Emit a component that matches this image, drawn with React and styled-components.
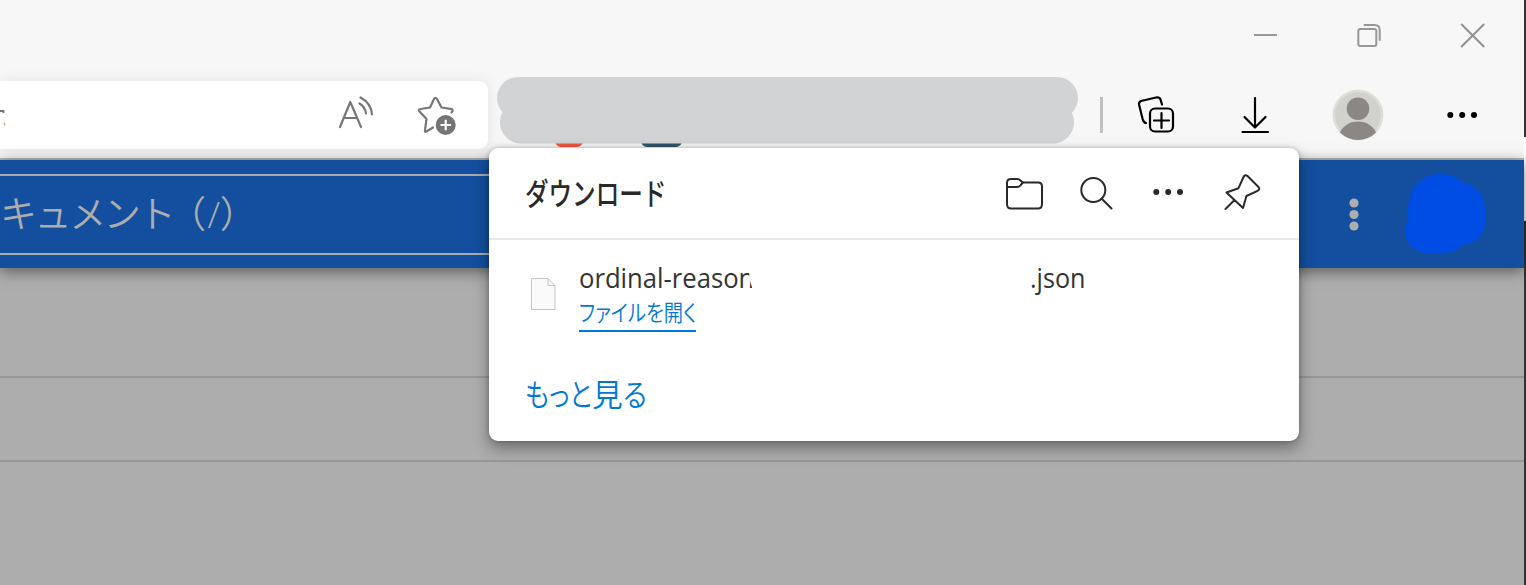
import React from "react";
import styled, { createGlobalStyle } from "styled-components";

const GlobalStyle = createGlobalStyle`
  * { box-sizing: border-box; }
  html, body { margin: 0; padding: 0; overflow: hidden; }
  body { font-family: "Open Sans", "Noto Sans CJK JP", sans-serif; }
  svg { display: block; flex: none; overflow: visible; }
`;

const Screen = styled.div`
  position: relative;
  display: flex;
  width: 1526px;
  height: 585px;
  overflow: hidden;
  background: #adadad;
`;

const BrowserWindow = styled.div`
  width: 1524px;
  display: flex;
  flex-direction: column;
`;

const WindowEdge = styled.div`
  width: 2px;
  background: linear-gradient(#333 137px, #fff 137px, #fff 221px, #333 221px);
`;

const TitleBar = styled.header`
  height: 71px;
  flex: none;
  display: flex;
  justify-content: flex-end;
  background: #f7f7f7;
  padding: 21px 38px 0 0;
  gap: 75px;
`;

const ToolBar = styled.div`
  height: 89px;
  flex: none;
  display: flex;
  align-items: flex-start;
  background: #f7f7f7;
  border-bottom: 2px solid #b9b9bb;
`;

const AddressBar = styled.div`
  width: 488px;
  height: 68px;
  margin-top: 10px;
  display: flex;
  align-items: center;
  justify-content: space-between;
  background: #fff;
  border-radius: 0 9px 9px 0;
  box-shadow: 0 0 14px rgba(0, 0, 0, 0.09);
  padding-right: 28px;
`;

const AddressActions = styled.div`
  display: flex;
  gap: 43px;
`;

const ExtensionArea = styled.div`
  margin: 5px 0 0 8px;
  width: 584px;
`;

const ToolDivider = styled.div`
  width: 3px;
  height: 36px;
  margin: 26px 0 0 20px;
  background: #c0c0c0;
`;

const ToolActions = styled.div`
  flex: 1;
  display: flex;
  align-items: center;
  justify-content: space-between;
  height: 56px;
  margin: 16px 46px 0 34px;
`;

const AppBar = styled.div`
  position: relative;
  height: 108px;
  flex: none;
  display: flex;
  align-items: center;
  justify-content: space-between;
  background: #134f9e;
  box-shadow: 0 3px 14px rgba(0, 0, 0, 0.5);
  padding-right: 38px;
`;

const ScopeField = styled.div`
  width: 760px;
  height: 81px;
  display: flex;
  align-items: center;
  border: solid #a9acaf;
  border-width: 2px 0;
`;

const OpeningBracket = styled.span`
  font-feature-settings: "halt";
  margin: 0 4px 0 14.5px;
`;

const PathMark = styled.span`
  margin-right: 2px;
`;

const AppActions = styled.div`
  display: flex;
  align-items: center;
  gap: 45px;
`;

const PageRow = styled.div`
  height: ${(p) => p.$height}px;
  flex: none;
  border-bottom: 2px solid #979797;
`;

const FitText = styled.span`
  display: block;
  width: ${(p) => (p.$width ? `${p.$width}px` : "auto")};
  white-space: nowrap;
  font-size: ${(p) => p.$size}px;
  line-height: ${(p) => p.$line}px;
  font-weight: ${(p) => p.$weight || 400};
  letter-spacing: ${(p) => p.$spacing || 0}px;
  font-feature-settings: ${(p) => (p.$proportional ? '"palt"' : "normal")};
  color: ${(p) => p.$color};
  transform: scaleX(${(p) => p.$stretch || 1});
  transform-origin: left center;
`;

const DownloadPanel = styled.section`
  position: absolute;
  left: 489px;
  top: 148px;
  width: 810px;
  height: 293px;
  border-radius: 9px;
  background: #fff;
  box-shadow: 0 7px 16px rgba(0, 0, 0, 0.38), 0 0 4px rgba(0, 0, 0, 0.22);
`;

const PanelHeader = styled.div`
  height: 92px;
  display: flex;
  align-items: center;
  justify-content: space-between;
  border-bottom: 2px solid #e9e9e9;
  padding: 0 23px 0 36px;
`;

const PanelTitle = styled.div`
  width: 142px;
`;

const PanelActions = styled.div`
  display: flex;
  align-items: center;
`;

const PanelButton = styled.div`
  width: 72px;
  height: 72px;
  display: flex;
  align-items: center;
  justify-content: center;
  padding-bottom: ${(p) => p.$lift || 0}px;
  padding-top: ${(p) => p.$drop || 0}px;
`;

const DownloadItem = styled.div`
  display: flex;
  height: 92px;
  padding: 20px 0 0 42px;
  gap: 23px;
`;

const FileIconSlot = styled.div`
  padding-top: 17px;
`;

const FileDetails = styled.div`
  display: flex;
  flex-direction: column;
  align-items: flex-start;
`;

const FileName = styled.div`
  display: flex;
  gap: 269px;
  height: 36px;
`;

const NameStart = styled.div`
  width: 182px;
  clip-path: polygon(0 0, 170.2px 0, 170.2px 19px, 173px 27px, 173px 100%, 0 100%);
`;

const OpenLink = styled.a`
  width: 117px;
  height: 36px;
  border-bottom: 2px solid #0078d4;
`;

const MoreLink = styled.div`
  display: flex;
  width: 126px;
  margin: 40px 0 0 36px;
`;

const stroke = (color, width) => ({
  fill: "none",
  stroke: color,
  strokeWidth: width,
  strokeLinecap: "round",
  strokeLinejoin: "round",
});

const MinimizeIcon = () => (
  <svg width="28" height="28" viewBox="0 0 28 28">
    <path d="M2 14H25" fill="none" stroke="#979797" strokeWidth="2" />
  </svg>
);

const RestoreIcon = () => (
  <svg width="28" height="28" viewBox="0 0 28 28" {...stroke("#979797", 2)}>
    <rect x="3.300" y="8" width="18" height="17" rx="2" />
    <path d="M9.500 4H19.500C23 4 24.700 6 24.700 9V19" />
  </svg>
);

const CloseIcon = () => (
  <svg width="28" height="28" viewBox="0 0 28 28" {...stroke("#919191", 2)}>
    <path d="M3.700 3.500L25.700 25.500M25.700 3.500L3.700 25.500" />
  </svg>
);

const AddressRemnant = () => (
  <svg width="8" height="20" viewBox="0 0 8 20">
    <path d="M0 6H3.500V8" fill="none" stroke="#77747c" strokeWidth="1.800" />
    <path d="M4.300 17.500L4.800 20.500" fill="none" stroke="#c69676" strokeWidth="1.200" />
  </svg>
);

const ReadAloudIcon = () => (
  <svg width="38" height="40" viewBox="0 0 38 40" {...stroke("#777", 2.200)}>
    <path d="M3 32L13.300 7L24 32M6.500 23H20" />
    <path d="M22.500 8.500C26.500 11 28.500 14 29 18.500M23.500 2.500C31 6.500 34.500 12 35 19.500" />
  </svg>
);

const FavoriteIcon = () => (
  <svg width="42" height="40" viewBox="0 -1 42 40">
    <path
      d="M15 31.500L8.500 35.500Q6.500 36.500 7 34L8.500 23L1.500 15.500Q0 13.500 2.500 13L12 11.500L16 3Q17.500 0.800 19 3L23.500 11.500L34 13.200Q35.500 14 33.500 16.500"
      {...stroke("#777", 2.200)}
    />
    <circle cx="27.700" cy="29" r="10" fill="#747574" />
    <path d="M22.500 29H33M27.700 23.700V34.200" fill="none" stroke="#fff" strokeWidth="2.200" />
  </svg>
);

const HiddenExtensions = () => (
  <svg width="584" height="72" viewBox="0 0 584 72">
    <path d="M58 64H88Q86 71 81 71H65Q60 71 58 64Z" fill="#f4563f" />
    <path d="M144 64H187Q185 71 180 71H151Q146 71 144 64Z" fill="#30566a" />
    <rect x="1" y="1" width="581" height="42" rx="21" fill="#d1d3d4" />
    <rect x="4" y="25" width="574" height="42.500" rx="21" fill="#d1d3d4" />
  </svg>
);

const CollectionsIcon = () => (
  <svg width="40" height="40" viewBox="0 0 40 40" {...stroke("#000", 2.200)}>
    <rect x="13" y="13.500" width="23" height="23" rx="5" />
    <path d="M17 25.500H32M24.500 18V33" />
    <path d="M9 28C6.500 27.500 6.200 26 5.500 23.500L2.100 9.800Q1.500 7 4 6L19 2.500Q22.500 1.800 23.500 4.500L25 9.500" />
  </svg>
);

const DownloadIcon = () => (
  <svg width="30" height="40" viewBox="-1 0 30 40" {...stroke("#000", 2.200)}>
    <path d="M15 3V32M4.500 22L15 32.500L25.500 22M2.500 37H28" />
  </svg>
);

const ProfileIcon = () => (
  <svg width="52" height="52" viewBox="0 0 52 52">
    <clipPath id="profile-face">
      <circle cx="26" cy="26" r="25" />
    </clipPath>
    <circle cx="26" cy="26" r="25.500" fill="#dfdfda" />
    <circle cx="26" cy="26" r="23" fill="#d1d1cd" />
    <circle cx="26" cy="19.700" r="11.300" fill="#8b8784" />
    <path clipPath="url(#profile-face)" d="M7 45Q13 32.500 26 32.500T45 45Q38 52 26 52T7 45Z" fill="#8b8784" />
  </svg>
);

const MoreIcon = ({ color }) => (
  <svg width="32" height="10" viewBox="0 0 32 10" fill={color}>
    <circle cx="4.300" cy="5" r="3" />
    <circle cx="16.200" cy="5" r="3" />
    <circle cx="28" cy="5" r="3" />
  </svg>
);

const VerticalDots = () => (
  <svg width="10" height="34" viewBox="0 0 10 34" fill="#adadad">
    <circle cx="5" cy="6" r="4.600" />
    <circle cx="5" cy="17.500" r="4.600" />
    <circle cx="5" cy="29" r="4.600" />
  </svg>
);

const AvatarBlob = () => (
  <svg width="82" height="80" viewBox="-0.500 0 82 80">
    <path
      d="M35 0C45 0 53 3 59 9C72 11 81 22 81 39C82 58 74 69 60 70C53 76 46 79 36 79H25C10 79 1 69 1 57C1 52 2 49 4 45C1 20 13 0 35 0Z"
      fill="#004de6"
    />
  </svg>
);

const FolderIcon = () => (
  <svg width="38" height="36" viewBox="0 0 38 36" {...stroke("#292929", 2)}>
    <path d="M2 28V7Q2 3 6 3H12Q14 3 15.500 4.500L17.800 6.500H33Q37 6.500 37 10.500V28Q37 32.500 33 32.500H6Q2 32.500 2 28Z" />
    <path d="M2 11H12Q14 11 15.500 9.300L17.800 6.500" />
  </svg>
);

const SearchIcon = () => (
  <svg width="36" height="36" viewBox="0 0 36 36" {...stroke("#292929", 2)}>
    <circle cx="15.300" cy="15" r="12" />
    <path d="M23.500 23.500L33.500 33.500" />
  </svg>
);

const PinIcon = () => (
  <svg width="40" height="38" viewBox="-4 0 40 38" {...stroke("#292929", 2)}>
    <path d="M1.500 36L10.500 27M2.500 19.500L14.500 15.200L19.500 4Q21 1 23.500 3L34.500 14Q36.500 16.500 33.500 17.800L22.500 23L19 35L2.500 19.500Z" />
  </svg>
);

const FileIcon = () => (
  <svg width="25" height="34" viewBox="0 0 25 34">
    <path d="M0.500 1.500H17L24 8.500V32.500H0.500Z" fill="#fafafa" stroke="#c5c5c5" />
    <path d="M17 1.500V8.500H24" fill="none" stroke="#c5c5c5" />
  </svg>
);

const linkText = { $proportional: true, $weight: 350, $color: "#0078d4" };

export default function App() {
  return (
    <Screen>
      <GlobalStyle />
      <BrowserWindow>
        <TitleBar>
          <MinimizeIcon />
          <RestoreIcon />
          <CloseIcon />
        </TitleBar>
        <ToolBar>
          <AddressBar>
            <AddressRemnant />
            <AddressActions>
              <ReadAloudIcon />
              <FavoriteIcon />
            </AddressActions>
          </AddressBar>
          <ExtensionArea>
            <HiddenExtensions />
          </ExtensionArea>
          <ToolDivider />
          <ToolActions>
            <CollectionsIcon />
            <DownloadIcon />
            <ProfileIcon />
            <MoreIcon color="#000" />
          </ToolActions>
        </ToolBar>
        <AppBar>
          <ScopeField>
            <FitText $size={37} $line={50} $weight={350} $spacing={-2.4} $color="#adadad">
              キュメント
              <OpeningBracket>（</OpeningBracket>
              <PathMark>/</PathMark>
              ）
            </FitText>
          </ScopeField>
          <AppActions>
            <VerticalDots />
            <AvatarBlob />
          </AppActions>
        </AppBar>
        <PageRow $height={110} />
        <PageRow $height={84} />
      </BrowserWindow>
      <WindowEdge />

      <DownloadPanel>
        <PanelHeader>
          <PanelTitle>
            <FitText $size={31} $line={44} $weight={500} $stretch={0.76} $color="#292929">
              ダウンロード
            </FitText>
          </PanelTitle>
          <PanelActions>
            <PanelButton $drop={2}>
              <FolderIcon />
            </PanelButton>
            <PanelButton>
              <SearchIcon />
            </PanelButton>
            <PanelButton $lift={3}>
              <MoreIcon color="#292929" />
            </PanelButton>
            <PanelButton $lift={2}>
              <PinIcon />
            </PanelButton>
          </PanelActions>
        </PanelHeader>
        <DownloadItem>
          <FileIconSlot>
            <FileIcon />
          </FileIconSlot>
          <FileDetails>
            <FileName>
              <NameStart>
                <FitText $size={27} $line={36} $stretch={0.95} $color="#333">
                  ordinal-reason
                </FitText>
              </NameStart>
              <FitText $size={27} $line={36} $stretch={0.93} $color="#333">
                .json
              </FitText>
            </FileName>
            <OpenLink>
              <FitText $size={23} $line={32} $stretch={0.84} {...linkText}>
                ファイルを開く
              </FitText>
            </OpenLink>
          </FileDetails>
        </DownloadItem>
        <MoreLink>
          <FitText $size={31} $line={44} $width={67} $stretch={0.82} {...linkText}>
            もっと
          </FitText>
          <FitText $size={31} $line={44} $width={31} $stretch={0.99} {...linkText}>
            見
          </FitText>
          <FitText $size={31} $line={44} $width={25} $stretch={0.86} {...linkText}>
            る
          </FitText>
        </MoreLink>
      </DownloadPanel>
    </Screen>
  );
}
